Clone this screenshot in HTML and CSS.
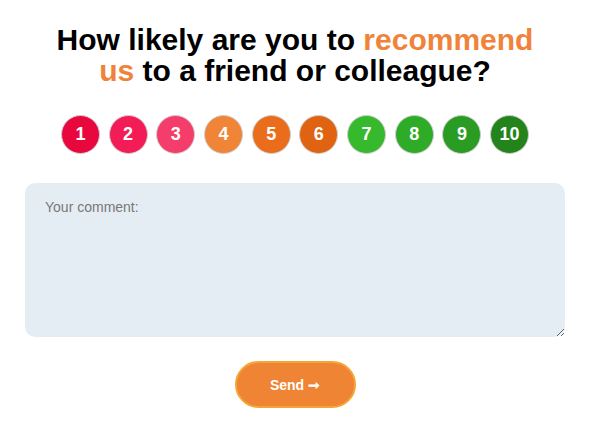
FILE: index.html
```html
<!DOCTYPE html>
<html lang="en">
<head>
  <meta charset="UTF-8">
  <title>Feedback</title>
  <meta name="viewport" content="width=device-width, initial-scale=1">
  <link rel="stylesheet" href="styles.css">
</head>
<body>
  <form class="survey">
    <h2 class="survey-title">How likely are you to <span class="accent">recommend us</span> to a friend or colleague?</h2>

    <div class="scores">
      <button type="button" class="score s1">1</button>
      <button type="button" class="score s2">2</button>
      <button type="button" class="score s3">3</button>
      <button type="button" class="score s4">4</button>
      <button type="button" class="score s5">5</button>
      <button type="button" class="score s6">6</button>
      <button type="button" class="score s7">7</button>
      <button type="button" class="score s8">8</button>
      <button type="button" class="score s9">9</button>
      <button type="button" class="score s10">10</button>
    </div>

    <textarea class="comment" placeholder="Your comment:"></textarea>

    <div class="actions">
      <button type="submit" class="send">Send &#10142;</button>
    </div>
  </form>
</body>
</html>
```

FILE: styles.css
```css
* { box-sizing: border-box; }
body {
  font-family: Arial, "Liberation Sans", sans-serif;
  background: #fff;
  margin: 0;
}
.survey {
  padding: 0 25px;
}
.survey-title {
  max-width: 495px;
  margin: 24px auto 0;
  font-size: 30px;
  line-height: 31px;
  font-weight: bold;
  text-align: center;
  color: #000;
}
.accent {
  color: #f0833a;
}
.scores {
  display: flex;
  justify-content: center;
  gap: 8.7px;
  margin-top: 29px;
}
.score {
  width: 39px;
  height: 39px;
  border-radius: 50%;
  border: 1px solid #cfcfcf;
  color: #fff;
  font-family: Arial, "Liberation Sans", sans-serif;
  font-size: 18px;
  font-weight: bold;
  padding: 0;
  cursor: pointer;
}
.s1 { background: #e8083e; }
.s2 { background: #f41c57; }
.s3 { background: #f53d6b; }
.s4 { background: #f08437; }
.s5 { background: #ea6d1b; }
.s6 { background: #e06311; }
.s7 { background: #36b92c; }
.s8 { background: #2fac27; }
.s9 { background: #2a9c23; }
.s10 { background: #22841b; }
.comment {
  display: block;
  width: 100%;
  height: 154px;
  margin-top: 29px;
  padding: 16px 20px;
  border: none;
  border-radius: 10px;
  background: #e5edf4;
  font-family: Arial, "Liberation Sans", sans-serif;
  font-size: 14px;
  color: #333;
}
.comment::placeholder {
  color: #777;
}
.actions {
  display: flex;
  justify-content: center;
  margin-top: 24px;
}
.send {
  width: 121px;
  height: 47px;
  border-radius: 24px;
  border: 2px solid #f5a535;
  background: #ef8434;
  color: #fff;
  font-family: Arial, "Liberation Sans", sans-serif;
  font-size: 14px;
  font-weight: bold;
  cursor: pointer;
}
```
